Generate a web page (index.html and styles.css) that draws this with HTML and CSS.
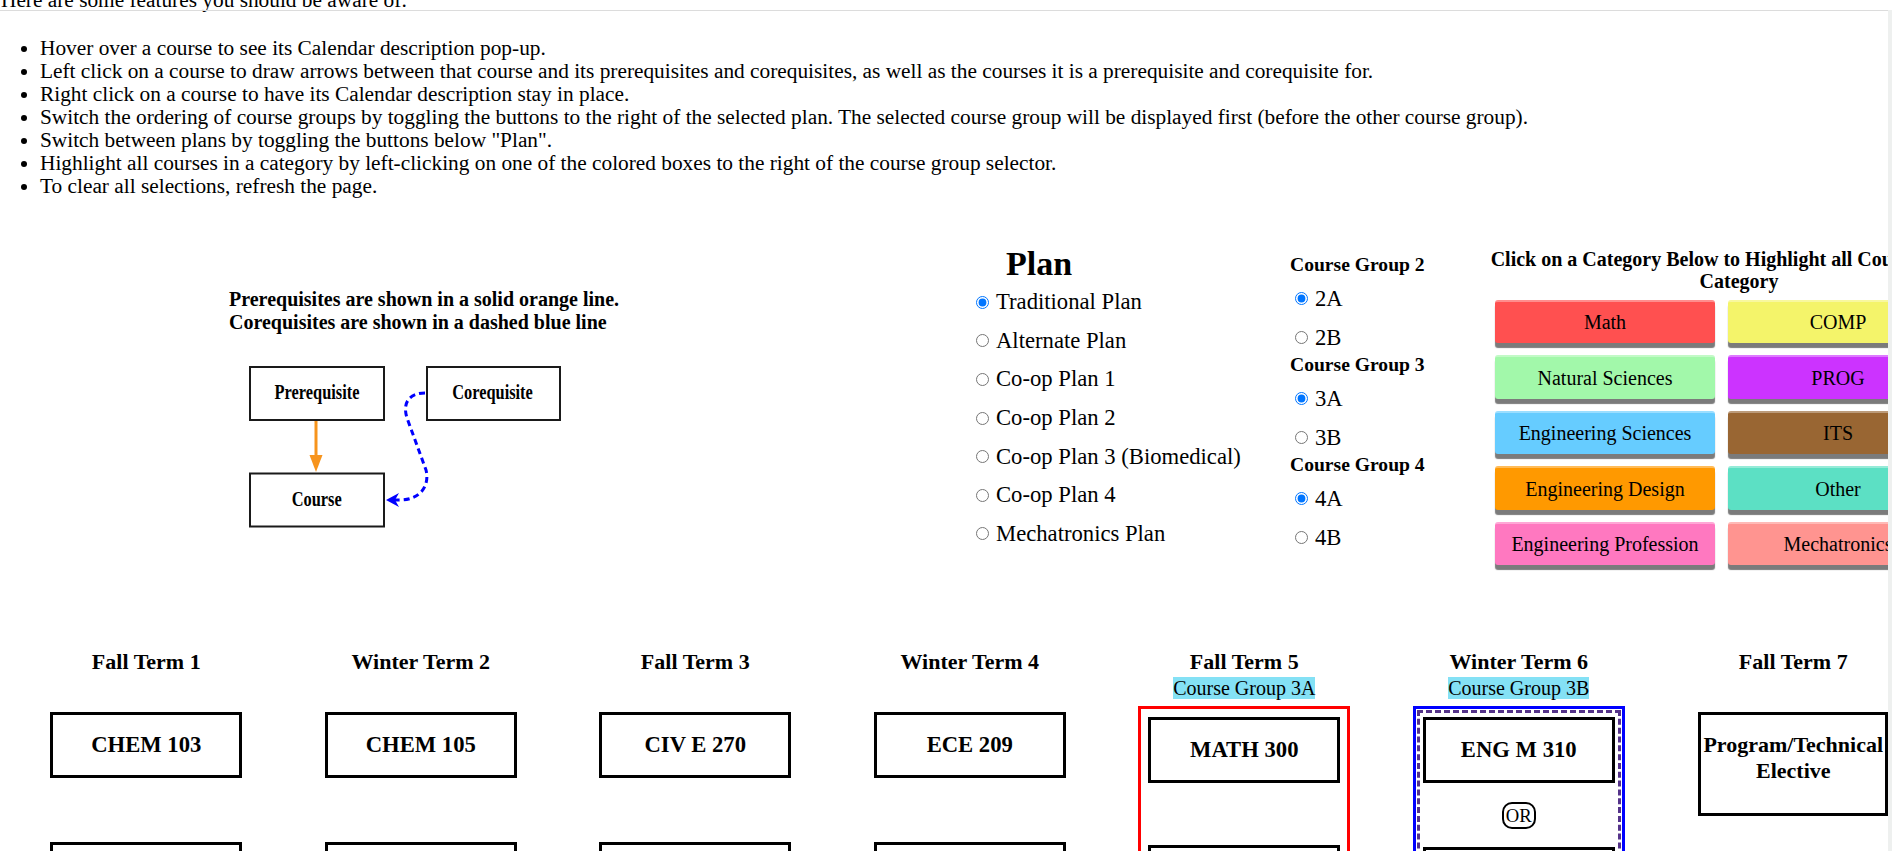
FILE: index.html
```html
<!DOCTYPE html>
<html lang="en">
<head>
<meta charset="utf-8">
<title>Course Sequencing</title>
<link rel="stylesheet" href="styles.css">
</head>
<body>
<div class="page">
  <p class="intro">Here are some features you should be aware of:</p>
  <ul class="features">
    <li>Hover over a course to see its Calendar description pop-up.</li>
    <li>Left click on a course to draw arrows between that course and its prerequisites and corequisites, as well as the courses it is a prerequisite and corequisite for.</li>
    <li>Right click on a course to have its Calendar description stay in place.</li>
    <li>Switch the ordering of course groups by toggling the buttons to the right of the selected plan. The selected course group will be displayed first (before the other course group).</li>
    <li>Switch between plans by toggling the buttons below "Plan".</li>
    <li>Highlight all courses in a category by left-clicking on one of the colored boxes to the right of the course group selector.</li>
    <li>To clear all selections, refresh the page.</li>
  </ul>

  <section class="controls">
    <div class="legend">
      <p class="legend-text">Prerequisites are shown in a solid orange line.<br>Corequisites are shown in a dashed blue line</p>
      <svg class="diagram" width="330" height="175" viewBox="0 0 330 175">
        <rect x="10" y="7" width="134" height="53" fill="#fff" stroke="#1a1a1a" stroke-width="2"/>
        <rect x="187" y="7" width="133" height="53" fill="#fff" stroke="#1a1a1a" stroke-width="2"/>
        <rect x="10" y="113.5" width="134" height="53" fill="#fff" stroke="#1a1a1a" stroke-width="2"/>
        <text x="34.5" y="39" textLength="85" lengthAdjust="spacingAndGlyphs" class="dg-t">Prerequisite</text>
        <text x="212.3" y="39" textLength="80.5" lengthAdjust="spacingAndGlyphs" class="dg-t">Corequisite</text>
        <text x="51.7" y="146" textLength="50" lengthAdjust="spacingAndGlyphs" class="dg-t">Course</text>
        <line x1="76" y1="61" x2="76" y2="97" stroke="#f7941d" stroke-width="3"/>
        <polygon points="69.5,95 82.5,95 76,112" fill="#f7941d"/>
        <path d="M185,33 C170,33 162,42 167,58 L186,110 C190,126 180,140 160,140 L154,140" fill="none" stroke="#0000ff" stroke-width="3" stroke-dasharray="6 4"/>
        <polygon points="146,140 159,133 155,140 159,147" fill="#0000ff"/>
      </svg>
    </div>

    <div class="plans">
      <h2>Plan</h2>
      <label class="opt"><input type="radio" name="plan" checked>Traditional Plan</label>
      <label class="opt"><input type="radio" name="plan">Alternate Plan</label>
      <label class="opt"><input type="radio" name="plan">Co-op Plan 1</label>
      <label class="opt"><input type="radio" name="plan">Co-op Plan 2</label>
      <label class="opt"><input type="radio" name="plan">Co-op Plan 3 (Biomedical)</label>
      <label class="opt"><input type="radio" name="plan">Co-op Plan 4</label>
      <label class="opt"><input type="radio" name="plan">Mechatronics Plan</label>
    </div>

    <div class="groups">
      <h4>Course Group 2</h4>
      <label class="opt"><input type="radio" name="g2" checked>2A</label>
      <label class="opt"><input type="radio" name="g2">2B</label>
      <h4>Course Group 3</h4>
      <label class="opt"><input type="radio" name="g3" checked>3A</label>
      <label class="opt"><input type="radio" name="g3">3B</label>
      <h4>Course Group 4</h4>
      <label class="opt"><input type="radio" name="g4" checked>4A</label>
      <label class="opt"><input type="radio" name="g4">4B</label>
    </div>

    <div class="categories">
      <h4 class="cat-title">Click on a Category Below to Highlight all Courses in that Category</h4>
      <div class="cat-grid">
        <button class="cat c-math">Math</button>
        <button class="cat c-comp">COMP</button>
        <button class="cat c-nat">Natural Sciences</button>
        <button class="cat c-prog">PROG</button>
        <button class="cat c-esci">Engineering Sciences</button>
        <button class="cat c-its">ITS</button>
        <button class="cat c-edes">Engineering Design</button>
        <button class="cat c-other">Other</button>
        <button class="cat c-eprof">Engineering Profession</button>
        <button class="cat c-mech">Mechatronics</button>
      </div>
    </div>
  </section>

  <section class="terms">
    <div class="term">
      <div class="term-head"><h3>Fall Term 1</h3></div>
      <div class="term-body plain">
        <div class="course">CHEM 103</div>
        <div class="course">ENGG 100</div>
      </div>
    </div>
    <div class="term">
      <div class="term-head"><h3>Winter Term 2</h3></div>
      <div class="term-body plain">
        <div class="course">CHEM 105</div>
        <div class="course">ENCMP 100</div>
      </div>
    </div>
    <div class="term">
      <div class="term-head"><h3>Fall Term 3</h3></div>
      <div class="term-body plain">
        <div class="course">CIV E 270</div>
        <div class="course">MATH 209</div>
      </div>
    </div>
    <div class="term">
      <div class="term-head"><h3>Winter Term 4</h3></div>
      <div class="term-body plain">
        <div class="course">ECE 209</div>
        <div class="course">MATH 201</div>
      </div>
    </div>
    <div class="term">
      <div class="term-head"><h3>Fall Term 5</h3><div class="cg-label"><span>Course Group 3A</span></div></div>
      <div class="term-body">
        <div class="grp-red">
          <div class="course">MATH 300</div>
          <div class="course">MEC E 301</div>
        </div>
      </div>
    </div>
    <div class="term">
      <div class="term-head"><h3>Winter Term 6</h3><div class="cg-label"><span>Course Group 3B</span></div></div>
      <div class="term-body">
        <div class="grp-blue">
          <div class="grp-dash">
            <div class="course">ENG M 310</div>
            <span class="or">OR</span>
            <div class="course">ENG M 401</div>
          </div>
        </div>
      </div>
    </div>
    <div class="term">
      <div class="term-head"><h3>Fall Term 7</h3></div>
      <div class="term-body plain">
        <div class="course elective">Program/Technical Elective</div>
        <div class="course">MEC E 403</div>
      </div>
    </div>
  </section>
</div>
<div class="frame-line"></div>
<div class="scroll-strip"></div>
</body>
</html>
```

FILE: styles.css
```css
html, body {
  margin: 0;
  padding: 0;
}
body {
  font-family: "Liberation Serif", "Times New Roman", serif;
  color: #000;
  background: #fff;
  overflow: hidden;
}
.page {
  position: relative;
  width: 1888px;
  height: 851px;
  overflow: hidden;
}
.intro {
  margin: -11px 0 0 1px;
  font-size: 21.33px;
  line-height: 23px;
}
.features {
  margin: 25px 0 0;
  padding-left: 40px;
  font-size: 21.33px;
  line-height: 23px;
}

/* ---------- controls ---------- */
.controls {
  display: flex;
  align-items: flex-start;
  margin-top: 42px;
  height: 340px;
  padding-left: 229px;
}
.legend {
  flex: none;
  width: 742px;
  margin-top: 47.5px;
}
.legend-text {
  margin: 0;
  font-size: 20px;
  font-weight: bold;
  line-height: 23px;
  white-space: nowrap;
}
.diagram {
  display: block;
  margin: 26.5px 0 0 11px;
}
.dg-t {
  font-family: "Liberation Serif", serif;
  font-weight: bold;
  font-size: 20px;
  fill: #000;
}

.plans {
  flex: none;
  width: 319px;
  margin-top: 4px;
}
.plans h2 {
  margin: 0 0 0 35px;
  font-size: 34px;
  line-height: 39px;
}
.opt {
  display: flex;
  align-items: center;
  height: 38.6px;
  font-size: 22.67px;
  line-height: 26px;
  white-space: nowrap;
}
.opt input {
  flex: none;
  width: 13px;
  height: 13px;
  margin: 0 7px 0 5px;
}

.groups {
  flex: none;
  width: 199px;
  margin-top: 17px;
}
.groups h4 {
  margin: 0 0 6px;
  font-size: 19.6px;
  line-height: 16px;
  white-space: nowrap;
}
.groups .opt {
  height: 39px;
}

.categories {
  flex: none;
  width: 500px;
  margin-top: 8px;
}
.cat-title {
  margin: 0;
  font-size: 20px;
  line-height: 22.4px;
  text-align: center;
}
.cat-grid {
  display: grid;
  grid-template-columns: 220px 220px;
  column-gap: 13px;
  row-gap: 12.2px;
  margin: 7.2px 0 0 6px;
}
.cat {
  box-sizing: border-box;
  height: 43.3px;
  padding: 0;
  border: 0;
  border-top: 2px solid rgba(255, 255, 255, 0.35);
  border-radius: 3px;
  font-family: "Liberation Serif", serif;
  font-size: 20px;
  color: #000;
  white-space: nowrap;
  box-shadow: 0 5px 1px #7b7b7b;
}
.c-math { background: #ff5050; }
.c-comp { background: #f4f46a; }
.c-nat { background: #a2f8aa; }
.c-prog { background: #cc33ff; }
.c-esci { background: #66ccff; }
.c-its { background: #996633; }
.c-edes { background: #ff9900; }
.c-other { background: #5ce0c4; }
.c-eprof { background: #ff78c0; }
.c-mech { background: #ff9490; }

/* ---------- terms ---------- */
.terms {
  display: grid;
  grid-template-columns: repeat(7, 274.5px);
  margin: 68.5px 0 0 9px;
}
.term {
  display: flex;
  flex-direction: column;
  align-items: center;
  text-align: center;
}
.term-head {
  height: 57.5px;
}
.term-head h3 {
  margin: 0;
  font-size: 22px;
  line-height: 25px;
  white-space: nowrap;
}
.cg-label {
  margin-top: 3px;
  font-size: 20px;
  line-height: 23px;
  white-space: nowrap;
}
.cg-label span {
  background: #84e1f5;
}
.term-body {
  display: flex;
  flex-direction: column;
  align-items: center;
}
.course {
  box-sizing: border-box;
  flex: none;
  width: 192px;
  height: 66px;
  border: 3px solid #000;
  display: flex;
  align-items: center;
  justify-content: center;
  font-weight: bold;
  font-size: 22.67px;
  background: #fff;
}
.plain > .course:first-child {
  margin-top: 6px;
}
.plain > .course + .course {
  margin-top: 64px;
}
.elective {
  width: 190px;
  height: 104px;
  font-size: 22px;
  line-height: 26px;
  padding-bottom: 12px;
}
.grp-red {
  border: 3px solid #f00;
  padding: 8px 7px;
}
.grp-red > .course + .course {
  margin-top: 62px;
}
.grp-blue {
  border: 3px solid #0000ff;
  padding: 1px;
}
.grp-dash {
  display: flex;
  flex-direction: column;
  align-items: center;
  border: 3px dashed #55338a;
  padding: 4px 3px 3px;
}
.or {
  display: block;
  border: 2px solid #000;
  border-radius: 10px;
  padding: 0 2px;
  font-size: 18.67px;
  line-height: 23px;
  margin: 19px 0 18px;
}

/* ---------- frame chrome ---------- */
.frame-line {
  position: absolute;
  top: 10px;
  left: 0;
  width: 1888px;
  height: 1px;
  background: #dcdcdc;
}
.scroll-strip {
  position: absolute;
  top: 10px;
  right: 0;
  width: 4px;
  bottom: 0;
  background: #eef0ef;
}
```
